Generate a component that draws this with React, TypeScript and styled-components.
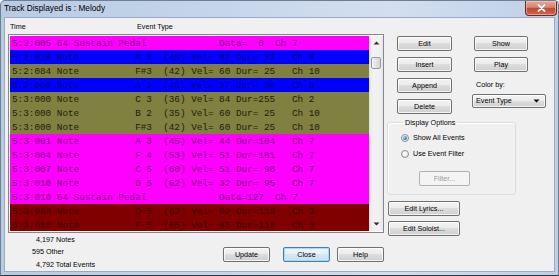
import React from "react";
import styled, { createGlobalStyle, css } from "styled-components";

const GlobalStyle = createGlobalStyle`
  html, body { margin: 0; padding: 0; background: #ffffff; }
  body { font-family: "Liberation Sans", Arial, sans-serif; }
  * { box-sizing: border-box; }
`;

const UI_FONT = `"Liberation Sans", Arial, sans-serif`;

const Window = styled.div`
  width: 559px;
  height: 276px;
  display: flex;
  flex-direction: column;
  border: 1px solid #6e7f93;
  border-bottom-color: #2f3640;
  border-radius: 5px 5px 0 0;
  background: linear-gradient(to right, #b7cbe3 0%, #c6d6ea 40%, #d3dff0 70%, #bdd0e7 100%);
  padding: 0 3px 3px 3px;
  overflow: hidden;
`;

const TitleBar = styled.div`
  height: 17px;
  display: flex;
  align-items: flex-start;
  justify-content: space-between;
`;

const Title = styled.div`
  font-family: ${UI_FONT};
  font-size: 8.3px;
  line-height: 11px;
  padding-top: 2px;
  color: #000;
`;

const CloseBox = styled.div`
  width: 32px;
  height: 15px;
  margin-right: -2px;
  border: 1px solid #6b2a22;
  border-top: none;
  border-radius: 0 0 4px 4px;
  background: linear-gradient(#e8aa9f 0%, #d7806f 45%, #c0452f 55%, #cf6a52 100%);
  box-shadow: inset 0 0 0 1px rgba(255, 210, 200, 0.5);
  display: flex;
  align-items: center;
  justify-content: center;
`;

const Client = styled.div`
  flex: 1;
  display: flex;
  background: #f0f0f0;
  border: 1px solid #9aabc0;
`;

const LeftPane = styled.div`
  width: 376px;
  margin-left: 3px;
  display: flex;
  flex-direction: column;
`;

const Header = styled.div`
  height: 16px;
  display: grid;
  grid-template-columns: 127px auto;
  padding: 3px 0 0 2px;
  font-family: ${UI_FONT};
  font-size: 7.2px;
  line-height: 12px;
  color: #000;
`;

const ListBox = styled.div`
  height: 199px;
  display: flex;
  border: 1px solid #828790;
  padding: 1px 0 1px 1px;
  background: #ffffff;
`;

const Rows = styled.div`
  flex: 1;
  display: flex;
  flex-direction: column;
  overflow: hidden;
`;

type Tone = "magenta" | "blue" | "olive" | "maroon";

const tones: Record<Tone, { bg: string; fg: string }> = {
  magenta: { bg: "#ff00ff", fg: "#800080" },
  blue: { bg: "#0000ff", fg: "#000080" },
  olive: { bg: "#808040", fg: "#1e1e0c" },
  maroon: { bg: "#800000", fg: "#400000" },
};

const Row = styled.div<{ $tone: Tone }>`
  height: 14px;
  flex: none;
  padding: 1px 0 0 2px;
  font-family: "Liberation Mono", "Courier New", monospace;
  font-size: 9.33px;
  line-height: 14px;
  white-space: pre;
  background: ${(p) => tones[p.$tone].bg};
  color: ${(p) => tones[p.$tone].fg};
`;

const ScrollBar = styled.div`
  width: 14px;
  display: flex;
  flex-direction: column;
  background: linear-gradient(to right, #e4e4e4, #f1f1f1 25%, #f1f1f1 75%, #e6e6e6);
`;

const ScrollArrow = styled.div`
  height: 14px;
  display: flex;
  align-items: center;
  justify-content: center;
`;

const ScrollTrack = styled.div`
  flex: 1;
  display: flex;
  flex-direction: column;
  align-items: center;
`;

const Thumb = styled.div`
  width: 10px;
  height: 12px;
  margin-top: 7px;
  border: 1px solid #9a9a9a;
  border-radius: 2px;
  background: linear-gradient(to right, #f4f4f4, #e0e0e0 60%, #d4d4d4);
`;

const Footer = styled.div`
  flex: 1;
  display: flex;
  justify-content: space-between;
`;

const Stats = styled.div`
  padding-top: 1px;
  margin-left: 28px;
  font-family: ${UI_FONT};
  font-size: 7.2px;
  line-height: 12.4px;
  color: #000;
`;

const StatLine = styled.div<{ $indent?: number }>`
  margin-left: ${(p) => p.$indent ?? 0}px;
  white-space: nowrap;
`;

const FooterButtons = styled.div`
  display: flex;
  align-items: flex-start;
  padding-top: 14px;
`;

const Btn = styled.button<{ $w: number; $mr?: number; $variant?: "default" | "disabled" }>`
  width: ${(p) => p.$w}px;
  height: 15px;
  flex: none;
  margin: 0 ${(p) => p.$mr ?? 0}px 0 0;
  padding: 0;
  font-family: ${UI_FONT};
  font-size: 7.2px;
  line-height: 13px;
  color: #000;
  text-align: center;
  border: 1px solid #707070;
  border-radius: 2px;
  background: linear-gradient(#f3f3f3 0%, #ebebeb 49%, #dddddd 50%, #cfcfcf 100%);
  box-shadow: inset 0 0 0 1px rgba(255, 255, 255, 0.75);
  ${(p) =>
    p.$variant === "default" &&
    css`
      border-color: #3c7fb1;
      background: linear-gradient(#f1f7fb 0%, #e6f0f7 49%, #d6e7f3 50%, #c9dfef 100%);
      box-shadow: inset 0 0 0 1px #a9dbf6;
    `}
  ${(p) =>
    p.$variant === "disabled" &&
    css`
      border-color: #adb2b5;
      background: #f4f4f4;
      color: #9a9a9a;
      box-shadow: none;
    `}
`;

const RightPane = styled.div`
  flex: 1;
  display: flex;
  flex-direction: column;
  padding-top: 18px;
`;

const ButtonColumns = styled.div`
  display: flex;
  gap: 20px;
  margin-left: 13px;
`;

const Column = styled.div<{ $w: number }>`
  width: ${(p) => p.$w}px;
  display: flex;
  flex-direction: column;
  gap: 6px;
`;

const ColumnB = styled.div`
  width: 74px;
  display: flex;
  flex-direction: column;
`;

const IndentedBtn = styled(Btn)`
  margin-left: 2px;
  margin-bottom: 6px;
`;

const SmallLabel = styled.div`
  font-family: ${UI_FONT};
  font-size: 7.2px;
  line-height: 14px;
  color: #000;
  padding-left: 4px;
`;

const Combo = styled.div`
  margin-top: 2px;
  height: 14px;
  display: flex;
  align-items: center;
  justify-content: space-between;
  padding: 0 5px 0 3px;
  font-family: ${UI_FONT};
  font-size: 7.2px;
  color: #000;
  border: 1px solid #707070;
  border-radius: 2px;
  background: linear-gradient(#f3f3f3 0%, #ebebeb 49%, #dddddd 50%, #cfcfcf 100%);
  box-shadow: inset 0 0 0 1px rgba(255, 255, 255, 0.75);
`;

const Group = styled.fieldset`
  width: 129px;
  margin: 4px 0 0 3px;
  padding: 0 0 8px 13px;
  min-inline-size: 0;
  border: 1px solid #d5dfe5;
  border-radius: 3px;
  box-shadow: inset 1px 1px 0 #ffffff;
`;

const Legend = styled.legend`
  margin-left: 2px;
  padding: 0 2px;
  font-family: ${UI_FONT};
  font-size: 7.2px;
  line-height: 10px;
  color: #000;
`;

const RadioRow = styled.label<{ $first?: boolean }>`
  height: 16px;
  margin-top: ${(p) => (p.$first ? 2 : 0)}px;
  display: flex;
  align-items: center;
  gap: 4px;
  font-family: ${UI_FONT};
  font-size: 7.2px;
  color: #000;
`;

const RadioDot = styled.span<{ $checked?: boolean }>`
  width: 8px;
  height: 8px;
  border-radius: 50%;
  border: 1px solid #8c8f91;
  background: radial-gradient(circle at 50% 40%, #ffffff, #dedede);
  display: flex;
  align-items: center;
  justify-content: center;
  &::after {
    content: "";
    width: 4px;
    height: 4px;
    border-radius: 50%;
    background: ${(p) =>
      p.$checked ? "radial-gradient(circle at 35% 35%, #a8dbf3, #2a6a96 70%, #1b4a6b)" : "transparent"};
  }
`;

const FilterRow = styled.div`
  margin: 5px 0 0 18px;
`;

const SideButtons = styled.div`
  display: flex;
  flex-direction: column;
  gap: 5px;
  margin: 6px 0 0 4px;
`;

type Ev =
  | { tone: Tone; t: string; kind: "pedal"; data: number; ch: number }
  | {
      tone: Tone;
      t: string;
      kind: "note";
      note: string;
      num: number;
      vel: number;
      dur: number;
      ch: number;
    };

const events: Ev[] = [
  { tone: "magenta", t: "5:2:005", kind: "pedal", data: 0, ch: 7 },
  { tone: "blue", t: "5:2:010", kind: "note", note: "A 3", num: 45, vel: 82, dur: 32, ch: 8 },
  { tone: "olive", t: "5:2:084", kind: "note", note: "F#3", num: 42, vel: 60, dur: 25, ch: 10 },
  { tone: "blue", t: "5:2:089", kind: "note", note: "A 3", num: 45, vel: 97, dur: 20, ch: 8 },
  { tone: "olive", t: "5:3:000", kind: "note", note: "C 3", num: 36, vel: 84, dur: 255, ch: 2 },
  { tone: "olive", t: "5:3:000", kind: "note", note: "B 2", num: 35, vel: 60, dur: 25, ch: 10 },
  { tone: "olive", t: "5:3:000", kind: "note", note: "F#3", num: 42, vel: 60, dur: 25, ch: 10 },
  { tone: "magenta", t: "5:3:001", kind: "note", note: "A 3", num: 45, vel: 44, dur: 104, ch: 7 },
  { tone: "magenta", t: "5:3:004", kind: "note", note: "F 4", num: 53, vel: 51, dur: 101, ch: 7 },
  { tone: "magenta", t: "5:3:007", kind: "note", note: "C 5", num: 60, vel: 51, dur: 98, ch: 7 },
  { tone: "magenta", t: "5:3:010", kind: "note", note: "D 5", num: 62, vel: 32, dur: 95, ch: 7 },
  { tone: "magenta", t: "5:3:010", kind: "pedal", data: 127, ch: 7 },
  { tone: "maroon", t: "5:3:080", kind: "note", note: "D 5", num: 62, vel: 82, dur: 118, ch: 3 },
  { tone: "maroon", t: "5:3:080", kind: "note", note: "F 5", num: 65, vel: 65, dur: 116, ch: 3 },
];

const p3 = (n: number) => String(n).padStart(3, " ");

function formatEvent(e: Ev): string {
  if (e.kind === "pedal") {
    return `${e.t} ${"64 Sustain Pedal".padEnd(29, " ")}Data=${p3(e.data)}  Ch ${e.ch}`;
  }
  return `${e.t} ${"Note".padEnd(14, " ")}${e.note.padEnd(5, " ")}(${e.num}) Vel=${p3(e.vel)} Dur=${p3(
    e.dur
  )}   Ch ${e.ch}`;
}

const TriUp = () => (
  <svg width="7" height="4" viewBox="0 0 7 4">
    <path d="M0.5 3.5 L3.5 0.5 L6.5 3.5 Z" fill="#303030" />
  </svg>
);

const TriDown = ({ color = "#303030" }: { color?: string }) => (
  <svg width="7" height="4" viewBox="0 0 7 4">
    <path d="M0.5 0.5 L3.5 3.5 L6.5 0.5 Z" fill={color} />
  </svg>
);

const CloseGlyph = () => (
  <svg width="9" height="8" viewBox="0 0 9 8">
    <path d="M1.5 1 L7.5 7 M7.5 1 L1.5 7" stroke="#ffffff" strokeWidth="1.8" strokeLinecap="round" />
  </svg>
);

export default function App() {
  return (
    <>
      <GlobalStyle />
      <Window>
        <TitleBar>
          <Title>Track Displayed is : Melody</Title>
          <CloseBox>
            <CloseGlyph />
          </CloseBox>
        </TitleBar>
        <Client>
          <LeftPane>
            <Header>
              <span>Time</span>
              <span>Event Type</span>
            </Header>
            <ListBox>
              <Rows>
                {events.map((e, i) => (
                  <Row key={i} $tone={e.tone}>
                    {formatEvent(e)}
                  </Row>
                ))}
              </Rows>
              <ScrollBar>
                <ScrollArrow>
                  <TriUp />
                </ScrollArrow>
                <ScrollTrack>
                  <Thumb />
                </ScrollTrack>
                <ScrollArrow>
                  <TriDown />
                </ScrollArrow>
              </ScrollBar>
            </ListBox>
            <Footer>
              <Stats>
                <StatLine>4,197 Notes</StatLine>
                <StatLine $indent={-4}>595 Other</StatLine>
                <StatLine>4,792 Total Events</StatLine>
              </Stats>
              <FooterButtons>
                <Btn $w={47} $mr={13}>Update</Btn>
                <Btn $w={47} $mr={7} $variant="default">Close</Btn>
                <Btn $w={47}>Help</Btn>
              </FooterButtons>
            </Footer>
          </LeftPane>
          <RightPane>
            <ButtonColumns>
              <Column $w={55}>
                <Btn $w={55}>Edit</Btn>
                <Btn $w={55}>Insert</Btn>
                <Btn $w={55}>Append</Btn>
                <Btn $w={55}>Delete</Btn>
              </Column>
              <ColumnB>
                <IndentedBtn $w={54}>Show</IndentedBtn>
                <IndentedBtn $w={54}>Play</IndentedBtn>
                <SmallLabel>Color by:</SmallLabel>
                <Combo>
                  <span>Event Type</span>
                  <TriDown color="#000000" />
                </Combo>
              </ColumnB>
            </ButtonColumns>
            <Group>
              <Legend>Display Options</Legend>
              <RadioRow $first>
                <RadioDot $checked />
                <span>Show All Events</span>
              </RadioRow>
              <RadioRow>
                <RadioDot />
                <span>Use Event Filter</span>
              </RadioRow>
              <FilterRow>
                <Btn $w={51} $variant="disabled">Filter...</Btn>
              </FilterRow>
            </Group>
            <SideButtons>
              <Btn $w={72}>Edit Lyrics...</Btn>
              <Btn $w={72}>Edit Soloist...</Btn>
            </SideButtons>
          </RightPane>
        </Client>
      </Window>
    </>
  );
}
